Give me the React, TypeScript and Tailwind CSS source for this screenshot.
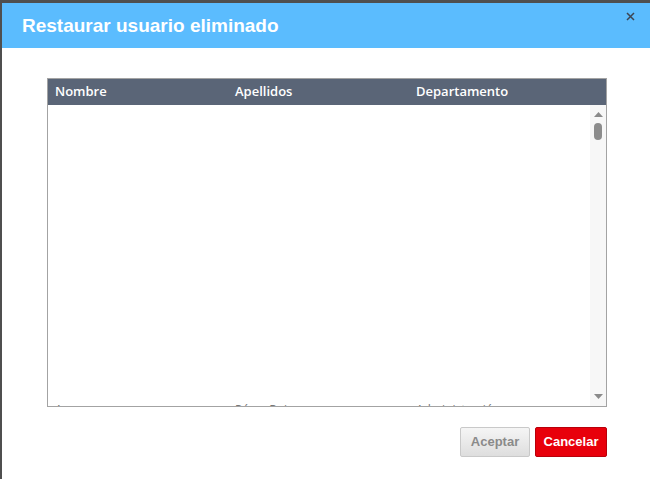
import React from "react";

export default function App() {
  const font = { fontFamily: '"Liberation Sans", Arial, sans-serif' };
  return (
    <div className="w-[650px] h-[479px] bg-[#4f4f4f] pt-[3px] pl-[2px] overflow-hidden">
      <div className="w-[648px] h-[476px] bg-white flex flex-col">
        <div className="relative h-[45px] bg-[#5bbcfe] flex items-center pl-[20px] shrink-0">
          <h1 className="text-white font-bold text-[19px] leading-none" style={font}>
            Restaurar usuario eliminado
          </h1>
          <svg className="absolute right-[15px] top-[9px]" width="9" height="9" viewBox="0 0 9 9">
            <path d="M1 1L8 8M8 1L1 8" stroke="#3d4552" strokeWidth="1.5" />
          </svg>
        </div>
        <div className="pl-[45px] pt-[30px] flex flex-col w-[605px]">
          <div className="border border-[#a3a3a3] h-[329px] flex flex-col">
            <div
              className="h-[26px] bg-[#5a6577] flex items-center text-white text-[13px] font-semibold shrink-0"
              style={{ fontFamily: '"Open Sans", "Noto Sans", sans-serif' }}
            >
              <div className="w-[180px] pl-[7px]">Nombre</div>
              <div className="w-[181px] pl-[7px]">Apellidos</div>
              <div className="pl-[7px]">Departamento</div>
            </div>
            <div className="flex-1 flex min-h-0">
              <div className="flex-1 overflow-hidden flex flex-col justify-end">
                <div
                  className="h-[2px] overflow-hidden flex text-[12px] text-[#777] leading-[16px]"
                  style={{ fontFamily: '"Open Sans", "Noto Sans", sans-serif' }}
                >
                  <div className="w-[180px] pl-[7px] shrink-0 -mt-[2px]">Ana</div>
                  <div className="w-[181px] pl-[7px] shrink-0 -mt-[2px]">Pérez Ruiz</div>
                  <div className="pl-[7px] shrink-0 -mt-[2px]">Administración</div>
                </div>
              </div>
              <div className="w-[16px] bg-[#f7f7f7] flex flex-col items-center pt-[7px] pb-[7px]">
                <svg width="9" height="5" viewBox="0 0 9 5">
                  <path d="M0 5L4.5 0L9 5Z" fill="#8a8a8a" />
                </svg>
                <div className="w-[8px] h-[17px] rounded-full bg-[#8c8c8c] mt-[6px]" />
                <div className="flex-1" />
                <svg width="9" height="5" viewBox="0 0 9 5">
                  <path d="M0 0L9 0L4.5 5Z" fill="#8a8a8a" />
                </svg>
              </div>
            </div>
          </div>
          <div className="flex justify-end gap-[5px] mt-[20px]" style={font}>
            <button className="h-[30px] w-[70px] border border-[#c9c9c9] rounded-[2px] bg-gradient-to-b from-[#f5f5f5] to-[#dedede] text-[#8a8a8a] text-[13px] font-bold">
              Aceptar
            </button>
            <button className="h-[30px] w-[72px] border border-[#b8000a] rounded-[2px] bg-[#e8000b] text-white text-[13px] font-bold">
              Cancelar
            </button>
          </div>
        </div>
      </div>
    </div>
  );
}
